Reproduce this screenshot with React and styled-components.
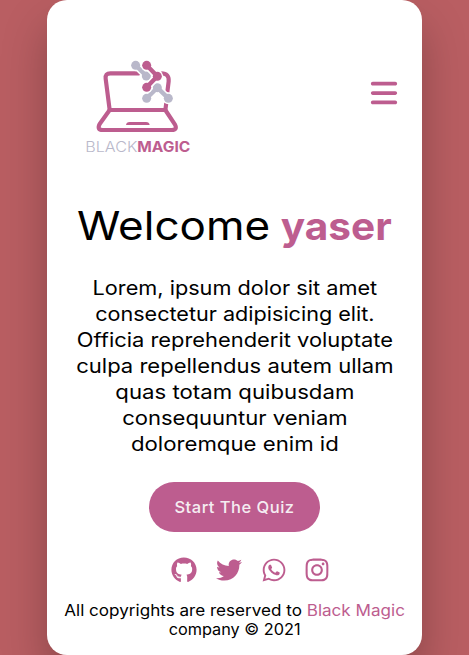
import React from "react";
import styled, { createGlobalStyle } from "styled-components";
import { FaBars } from "react-icons/fa6";
import { FaGithub, FaTwitter, FaWhatsapp, FaInstagram } from "react-icons/fa";

const pink = "#bd5d8f";
const grey = "#b9b8ca";

const GlobalStyle = createGlobalStyle`
  *, *::before, *::after { box-sizing: border-box; }
  body {
    margin: 0;
    background: #b95e62;
    color: #000;
    font-family: Inter, "Open Sans", sans-serif;
    overflow: hidden;
  }
  h1, p { margin: 0; font-weight: 400; }
`;

const Page = styled.div`
  display: flex;
  justify-content: center;
  height: 655px;
`;

const Card = styled.main`
  display: flex;
  flex-direction: column;
  align-items: center;
  width: 375px;
  height: 655px;
  background: #fff;
  border-radius: 20px;
  box-shadow: 0 25px 45px rgba(0, 0, 0, 0.25);
`;

const Header = styled.header`
  display: flex;
  justify-content: space-between;
  width: 100%;
  height: 160px;
  padding: 50px 23px 0 23px;
`;

const LogoArt = styled.svg`
  width: 140px;
  height: 110px;
`;

const LogoText = styled.text`
  font-family: Inter, sans-serif;
  font-size: 43px;
  font-weight: ${(p) => p.$weight};
  fill: ${(p) => p.$fill};
`;

const MenuButton = styled.button`
  display: flex;
  align-self: flex-start;
  margin-top: 28px;
  padding: 0;
  border: 0;
  background: none;
  color: ${pink};
  font-size: 30px;
`;

const Title = styled.h1`
  display: flex;
  justify-content: space-between;
  width: 315px;
  height: 48px;
  margin-top: 42px;
  font-size: 39px;
  line-height: 48px;
`;

const Word = styled.span`
  display: block;
  font-weight: ${(p) => (p.$strong ? 700 : 400)};
  color: ${(p) => (p.$strong ? pink : "inherit")};
  transform: scaleX(${(p) => p.$stretch});
  transform-origin: ${(p) => (p.$strong ? "right" : "left")};
`;

const Intro = styled.p`
  margin-top: 25px;
  font-size: 19.5px;
  line-height: 26px;
  text-align: center;
`;

const Line = styled.span`
  display: block;
  white-space: nowrap;
  transform: scaleX(${(p) => p.$stretch});
`;

const StartButton = styled.button`
  width: 171px;
  height: 50px;
  margin-top: 25px;
  padding: 0;
  border: 0;
  border-radius: 25px;
  background: ${pink};
  color: #f5edf2;
  font: 500 16.5px Inter, sans-serif;
  letter-spacing: 0.5px;
`;

const Socials = styled.nav`
  display: flex;
  gap: 20px;
  height: 26px;
  margin: 25px 0 0 30px;
  color: ${pink};
  font-size: 26px;
`;

const SocialIcon = styled.span`
  display: flex;
  justify-content: center;
  width: ${(p) => p.$width}px;

  svg {
    flex: none;
  }
`;

const Footer = styled.footer`
  margin-top: 18px;
  font-size: 15.5px;
  line-height: 19px;
  text-align: center;
`;

const Brand = styled.span`
  color: ${pink};
`;

function Molecule({ color, path, nodes }) {
  return (
    <g strokeLinecap="round" strokeLinejoin="round">
      <g fill="#fff" stroke="#fff">
        <path d={path} fill="none" strokeWidth="22" />
        {nodes.map(([x, y]) => (
          <circle key={`${x}-${y}`} cx={x} cy={y} r="17.5" stroke="none" />
        ))}
      </g>
      <g fill={color} stroke={color}>
        <path d={path} fill="none" strokeWidth="13" />
        {nodes.map(([x, y]) => (
          <circle key={`${x}-${y}`} cx={x} cy={y} r="13.5" stroke="none" />
        ))}
      </g>
    </g>
  );
}

function Logo() {
  return (
    <LogoArt viewBox="0 0 420 330" role="img" aria-label="Black Magic">
      <g fill="none" stroke={pink} strokeWidth="12.5" strokeLinejoin="round" strokeLinecap="round">
        <path d="M207 70H121Q105 70 107 86L119 180H286L289 158" />
        <path d="M274 70Q298 70 296 94L292 127" strokeLinecap="butt" />
        <path d="M119 180L89 222Q80 240 98 240H305Q323 240 315 224L286 180" />
      </g>
      <path d="M168 225Q169 216 179 216H228Q238 216 239 225Z" fill={pink} />
      <Molecule color={grey} path="M197 46L229 78" nodes={[[197, 46], [229, 78]]} />
      <Molecule
        color={grey}
        path="M230 145L262 113L295 145"
        nodes={[[230, 145], [262, 113], [295, 145]]}
      />
      <Molecule
        color={pink}
        path="M230 46L262 79L230 112"
        nodes={[[230, 46], [262, 79], [230, 112]]}
      />
      <LogoText x="46" y="306" $weight={300} $fill={grey} textLength="156" lengthAdjust="spacingAndGlyphs">
        BLACK
      </LogoText>
      <LogoText x="202" y="306" $weight={700} $fill={pink} textLength="159" lengthAdjust="spacingAndGlyphs">
        MAGIC
      </LogoText>
    </LogoArt>
  );
}

const introLines = [
  ["Lorem, ipsum dolor sit amet", 1.112],
  ["consectetur adipisicing elit.", 1.107],
  ["Officia reprehenderit voluptate", 1.122],
  ["culpa repellendus autem ullam", 1.13],
  ["quas totam quibusdam", 1.138],
  ["consequuntur veniam", 1.13],
  ["doloremque enim id", 1.138],
];

export default function App() {
  return (
    <Page>
      <GlobalStyle />
      <Card>
        <Header>
          <Logo />
          <MenuButton aria-label="Menu">
            <FaBars />
          </MenuButton>
        </Header>
        <Title>
          <Word $stretch={1.128}>Welcome</Word>
          <Word $strong $stretch={1.04}>yaser</Word>
        </Title>
        <Intro>
          {introLines.map(([text, stretch]) => (
            <Line key={text} $stretch={stretch}>{text} </Line>
          ))}
        </Intro>
        <StartButton>Start The Quiz</StartButton>
        <Socials>
          <SocialIcon $width={25.2}><FaGithub /></SocialIcon>
          <SocialIcon $width={26}><FaTwitter /></SocialIcon>
          <SocialIcon $width={22.8}><FaWhatsapp /></SocialIcon>
          <SocialIcon $width={22.8}><FaInstagram /></SocialIcon>
        </Socials>
        <Footer>
          <Line $stretch={1.102}>
            All copyrights are reserved to <Brand>Black Magic</Brand>
          </Line>
          <Line $stretch={1.05}>company © 2021</Line>
        </Footer>
      </Card>
    </Page>
  );
}
